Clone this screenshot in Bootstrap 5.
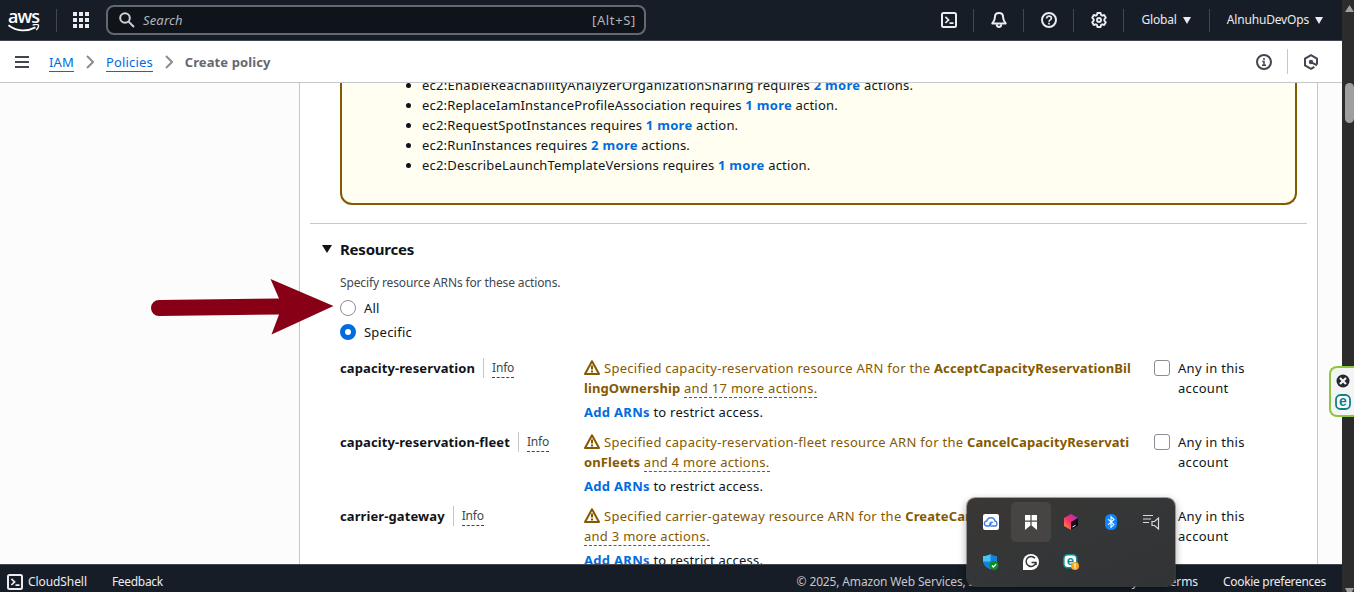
<!DOCTYPE html>
<html lang="en">
<head>
<meta charset="utf-8">
<meta name="viewport" content="width=device-width, initial-scale=1">
<title>Create policy | IAM</title>
<link href="https://cdn.jsdelivr.net/npm/bootstrap@5.3.0/dist/css/bootstrap.min.css" rel="stylesheet">
<style>
  body { font-family: "Noto Sans", "Open Sans", sans-serif; font-size: 13px; line-height: 20px; letter-spacing: .23px; color: #0f141a; background: #fcfcfd; }
  svg { display: block; flex: none; }
  a { color: #006ce0; }
  b { font-weight: 700; letter-spacing: .07px; }
  b.link { color: #006ce0; letter-spacing: .3px; }
  .app-shell { height: 592px; }

  .top-nav { height: 41px; background: #161d26; border-bottom: 1px solid #424650; color: #ebebf0; font-size: 12px; letter-spacing: -.17px; padding-left: 8px; }
  .top-nav .sep { width: 1px; height: 23px; background: #424650; }
  .aws-word { font-family: "Open Sans", sans-serif; font-size: 18px; line-height: 16px; letter-spacing: -.9px; font-weight: 600; color: #fff; }
  .search-box { width: 540px; height: 30px; border: 2px solid #656871; border-radius: 8px; background: #0f141a; font-size: 13px; letter-spacing: .15px; color: #b4b4bb; margin-left: 17px; padding: 0 8px 0 11px; }
  .search-box .keys { letter-spacing: .65px; }
  .nav-cell { width: 49px; }

  .crumb-bar { height: 42px; border-bottom: 1px solid #c6c6cd; background: #fff; color: #424650; padding-left: 15px; letter-spacing: .15px; }
  .crumb-bar a { text-decoration: none; border-bottom: 1px solid #006ce0; line-height: 18px; padding-top: 1px; }
  .crumb-now { color: #656871; letter-spacing: .1px; }

  .page-main { background: #fcfcfd; }
  .panel { width: 1019px; margin-left: 299px; background: #fff; border: solid #c6c6cd; border-width: 0 1px; padding: 0 10px 0 10px; height: 700px; }
  .warn-box { display: flow-root; height: 122px; margin: 0 10px 0 30px; border: 2px solid #855900; border-top: 0; border-radius: 0 0 12px 12px; background: #fffef0; }
  .warn-box ul { margin: -8px 0 0 0; padding-left: 80px; letter-spacing: .18px; }
  .warn-box .wide { letter-spacing: .27px; }
  .rule { height: 1px; background: #c6c6cd; margin-top: 18px; }
  .section-head { font-size: 15px; font-weight: 700; letter-spacing: -.23px; margin: 15px 0 0 12px; }
  .section-body { margin-left: 30px; }
  .hint { font-size: 12px; line-height: 16px; letter-spacing: -.13px; color: #424650; margin-top: 16px; margin-bottom: 7px; }
  .radio-dot { width: 16px; height: 16px; border: 1px solid #8c8c94; border-radius: 50%; background: #fff; }
  .radio-dot.on { border: 5px solid #006ce0; }
  .opt { margin-bottom: 4px; }
  .res-grid { display: grid; grid-template-columns: 244px 547px 1fr; column-gap: 0; row-gap: 10px; margin-top: 16px; }
  .res-name { letter-spacing: .1px; padding-right: 8px; }
  .info-wrap { border-left: 1px solid #c6c6cd; padding-left: 8px; height: 20px; }
  .info-link { font-size: 12px; letter-spacing: -.2px; line-height: 18px; color: #424650; border-bottom: 1px dashed #424650; padding-top: 1px; }
  .warn-text { color: #855900; letter-spacing: .27px; }
  .warn-text b { letter-spacing: .11px; }
  .warn-text svg { display: inline-block; vertical-align: -2px; margin-right: 4px; }
  .dashed { border-bottom: 1px dashed #855900; }
  .check-sq { width: 16px; height: 16px; border: 1px solid #8c8c94; border-radius: 3px; background: #fff; flex: none; margin: 2px 8px 0 23px; }
  .acct { width: 75px; letter-spacing: .3px; }

  .foot { height: 28px; background: #161d26; border-top: 1px solid #424650; color: #ebebf0; font-size: 12px; letter-spacing: -.08px; padding: 7px 16px 0 7px; }
  .foot .copy { color: #c6c6cd; letter-spacing: -.15px; }
  .scroll-track { width: 12px; background: #2c2c2c; }
  .scroll-thumb { width: 9px; height: 40px; border-radius: 5px; background: #9f9f9f; margin-left: 3px; }

  .arrow-mark { left: 150px; top: 278px; }
  .side-tab { left: 1329px; top: 366px; width: 25px; height: 51px; border: 2px solid #8dc63f; border-right: 0; border-radius: 8px 0 0 8px; background: #f4f4f4; padding: 6px 0 0 4px; }
  .tray { left: 967px; top: 498px; width: 208px; height: 88px; border-radius: 8px; background: linear-gradient(160deg, #3a3733, #353637 45%, #323335); box-shadow: 0 0 0 1px #55555580, 0 3px 9px #0006; padding: 4px; display: grid; grid-template-columns: repeat(5, 40px); grid-template-rows: 40px 40px; }
  .tray > div { display: flex; align-items: center; justify-content: center; border-radius: 5px; }
  .tray .hot { background: #464544; }
  .tray text, .side-tab text { font-family: "Liberation Sans", sans-serif; font-weight: 700; letter-spacing: 0; }
</style>
</head>
<body class="overflow-hidden">
<div class="app-shell d-flex position-relative overflow-hidden">
  <div class="d-flex flex-column flex-grow-1">

    <header class="top-nav d-flex align-items-center">
      <div class="d-flex flex-column" style="width:32px">
        <span class="aws-word">aws</span>
        <svg width="32" height="9" viewBox="0 0 32 9" fill="none" stroke="#fff"><path d="M0.5 1.2C8.5 7.5 19 7.8 27.5 3.4" stroke-width="1.8"/><path d="M24.6 1.2C27 .4 29.6.2 30.2.9c.6.8-.3 3.4-1.9 5.2" stroke-width="1.4"/></svg>
      </div>
      <div class="sep" style="margin-left:16px"></div>
      <svg style="margin-left:16px" width="16" height="16" fill="#ebebf0"><path d="M0 0h4v4H0zM6 0h4v4H6zM12 0h4v4h-4zM0 6h4v4H0zM6 6h4v4H6zM12 6h4v4h-4zM0 12h4v4H0zM6 12h4v4H6zM12 12h4v4h-4z"/></svg>
      <div class="search-box d-flex align-items-center">
        <svg width="16" height="16" viewBox="0 0 16 16" fill="none" stroke="#d0d0d6" stroke-width="2"><circle cx="6" cy="6" r="4.8"/><path d="M9.6 9.6 15 15"/></svg>
        <em class="ms-2">Search</em><span class="keys ms-auto">[Alt+S]</span>
      </div>
      <div class="ms-auto d-flex align-items-center">
        <div class="nav-cell d-flex justify-content-center">
          <svg width="16" height="16" viewBox="0 0 16 16" fill="none" stroke="#ebebf0" stroke-width="2"><rect x="1" y="1" width="14" height="14" rx="1.5"/><path d="m4.4 4.8 3.2 3.1-3.2 3.1M8.5 11.2h4" stroke-width="1.7"/></svg>
        </div>
        <div class="sep"></div>
        <div class="nav-cell d-flex justify-content-center">
          <svg width="16" height="16" viewBox="0 0 16 16" fill="none" stroke="#ebebf0" stroke-width="2" stroke-linejoin="round"><path d="M8 1C5.3 1 3.9 3 3.9 5.3c0 3-1.4 4.4-2.6 6.2h13.4c-1.2-1.8-2.6-3.2-2.6-6.2C12.1 3 10.7 1 8 1Z"/><path d="M5.8 12.2c0 1.8 1 2.8 2.2 2.8s2.2-1 2.2-2.8"/></svg>
        </div>
        <div class="sep"></div>
        <div class="nav-cell d-flex justify-content-center">
          <svg width="16" height="16" viewBox="0 0 16 16" fill="none" stroke="#ebebf0" stroke-width="2"><circle cx="8" cy="8" r="7"/><path d="M5.6 6.5C5.6 5 6.6 4.2 8 4.2s2.4.8 2.4 2.1C10.4 8 8 7.7 8 9.7M8 10.7v1.7" stroke-width="1.7"/></svg>
        </div>
        <div class="sep"></div>
        <div class="nav-cell d-flex justify-content-center">
          <svg width="16" height="16" viewBox="0 0 16 16" fill="none" stroke="#ebebf0" stroke-width="1.9" stroke-linejoin="round"><path d="M6.4 1h3.2l.5 2.1 1.1.6 2-.7 1.6 2.7L13.3 7.4v1.2l1.5 1.700-1.600 2.700-2-.7-1.100.6-.5 2.100H6.400l-.5-2.100-1.100-.6-2 .7-1.600-2.700 1.500-1.700V7.400L1.200 5.700 2.800 3l2 .7 1.100-.6Z"/><circle cx="8" cy="8" r="2"/></svg>
        </div>
        <div class="sep"></div>
        <span style="margin-left:17px">Global</span>
        <svg style="margin:0 18px 0 6px" width="8" height="7" fill="#ebebf0"><path d="M0 0h8L4 7Z"/></svg>
        <div class="sep"></div>
        <span style="margin-left:17px">AlnuhuDevOps</span>
        <svg style="margin:0 19px 0 6px" width="8" height="7" fill="#ebebf0"><path d="M0 0h8L4 7Z"/></svg>
      </div>
    </header>

    <nav class="crumb-bar d-flex align-items-center">
      <svg width="14" height="12" fill="#424650"><path d="M0 0h14v2H0zM0 5h14v2H0zM0 10h14v2H0z"/></svg>
      <a href="#" style="margin-left:20px">IAM</a>
      <svg style="margin:0 12px 0 12px" width="8" height="14" fill="none" stroke="#8c8c94" stroke-width="2"><path d="m1 1 6 6-6 6"/></svg>
      <a href="#">Policies</a>
      <svg style="margin:0 12px 0 12px" width="8" height="14" fill="none" stroke="#8c8c94" stroke-width="2"><path d="m1 1 6 6-6 6"/></svg>
      <b class="crumb-now">Create policy</b>
      <svg class="ms-auto" width="16" height="16" viewBox="0 0 16 16" fill="none" stroke="#424650" stroke-width="2"><circle cx="8" cy="8" r="7"/><path d="M8 4v2M6.300 7.500H8V11M6 11.300h4" stroke-width="1.500"/></svg>
      <div style="width:1px;height:25px;background:#c6c6cd;margin:0 16px 0 15px"></div>
      <svg style="margin-right:24px" width="14" height="16" viewBox="0 0 14 16" fill="none" stroke="#424650" stroke-width="2" stroke-linejoin="round"><path d="M13 10.500V4.600L7 1.200 1 4.600v6.800l6 3.400 3.400-2"/><circle cx="7" cy="8" r="1.200"/><path d="m7.500 8.300 5.500 3"/></svg>
    </nav>

    <main class="page-main flex-grow-1 overflow-hidden" style="height:0">
      <div class="panel">
        <div class="warn-box">
          <ul>
            <li class="wide">ec2:EnableReachabilityAnalyzerOrganizationSharing requires <b class="link">2 more</b> actions.</li>
            <li>ec2:ReplaceIamInstanceProfileAssociation requires <b class="link">1 more</b> action.</li>
            <li>ec2:RequestSpotInstances requires <b class="link">1 more</b> action.</li>
            <li>ec2:RunInstances requires <b class="link">2 more</b> actions.</li>
            <li>ec2:DescribeLaunchTemplateVersions requires <b class="link">1 more</b> action.</li>
          </ul>
        </div>
        <div class="rule"></div>
        <div class="section-head d-flex align-items-center">
          <svg style="margin-right:8px" width="10" height="8" fill="#0f141a"><path d="M0 0h10L5 8Z"/></svg>Resources
        </div>
        <div class="section-body">
          <div class="hint">Specify resource ARNs for these actions.</div>
          <div class="opt d-flex align-items-center gap-2"><span class="radio-dot"></span>All</div>
          <div class="opt d-flex align-items-center gap-2"><span class="radio-dot on"></span>Specific</div>

          <div class="res-grid">
            <div class="d-flex align-items-start"><b class="res-name">capacity-reservation</b><span class="info-wrap d-flex align-items-start"><span class="info-link">Info</span></span></div>
            <div>
              <div class="warn-text"><svg width="16" height="15" viewBox="0 0 16 15" fill="none" stroke="#855900" stroke-width="2" stroke-linejoin="round"><path d="M8 1.200 1 14h14Z"/><path d="M8 5.500v4M8 10.600v1.900"/></svg>Specified capacity-reservation resource ARN for the <b>AcceptCapacityReservationBil<br>lingOwnership</b> <span class="dashed">and 17 more actions.</span></div>
              <div class="mt-1"><b class="link">Add ARNs</b> to restrict access.</div>
            </div>
            <div class="d-flex align-items-start"><span class="check-sq"></span><span class="acct">Any in this account</span></div>

            <div class="d-flex align-items-start"><b class="res-name">capacity-reservation-fleet</b><span class="info-wrap d-flex align-items-start"><span class="info-link">Info</span></span></div>
            <div>
              <div class="warn-text"><svg width="16" height="15" viewBox="0 0 16 15" fill="none" stroke="#855900" stroke-width="2" stroke-linejoin="round"><path d="M8 1.200 1 14h14Z"/><path d="M8 5.500v4M8 10.600v1.900"/></svg>Specified capacity-reservation-fleet resource ARN for the <b>CancelCapacityReservati<br>onFleets</b> <span class="dashed">and 4 more actions.</span></div>
              <div class="mt-1"><b class="link">Add ARNs</b> to restrict access.</div>
            </div>
            <div class="d-flex align-items-start"><span class="check-sq"></span><span class="acct">Any in this account</span></div>

            <div class="d-flex align-items-start"><b class="res-name">carrier-gateway</b><span class="info-wrap d-flex align-items-start"><span class="info-link">Info</span></span></div>
            <div>
              <div class="warn-text"><svg width="16" height="15" viewBox="0 0 16 15" fill="none" stroke="#855900" stroke-width="2" stroke-linejoin="round"><path d="M8 1.200 1 14h14Z"/><path d="M8 5.500v4M8 10.600v1.900"/></svg>Specified carrier-gateway resource ARN for the <b>CreateCarrierGateway</b><br><span class="dashed">and 3 more actions.</span></div>
              <div class="mt-1"><b class="link">Add ARNs</b> to restrict access.</div>
            </div>
            <div class="d-flex align-items-start"><span class="check-sq"></span><span class="acct">Any in this account</span></div>
          </div>
        </div>
      </div>
    </main>

    <footer class="foot d-flex align-items-start">
      <svg style="margin-top:2px" width="16" height="16" viewBox="0 0 16 16" fill="none" stroke="#ebebf0" stroke-width="2"><rect x="1" y="1" width="14" height="14" rx="1.500"/><path d="m4.400 4.800 3.200 3.100-3.200 3.100M8.500 11.200h4" stroke-width="1.700"/></svg>
      <span style="margin-left:5px">CloudShell</span>
      <span style="margin-left:25px;letter-spacing:-.3px">Feedback</span>
      <span class="copy ms-auto">© 2025, Amazon Web Services, Inc. or its affiliates.</span>
      <span style="margin-left:27px">Privacy</span>
      <span style="margin-left:26px">Terms</span>
      <span style="margin-left:25px;letter-spacing:-.3px">Cookie preferences</span>
    </footer>
  </div>

  <div class="scroll-track d-flex flex-column">
    <svg style="margin:5px 0 0 3px" width="9" height="7" fill="#9f9f9f"><path d="M4.500 0 9 7H0Z"/></svg>
    <div class="scroll-thumb" style="margin-top:71px"></div>
    <svg class="mt-auto" style="margin-left:3px" width="9" height="4" fill="#9f9f9f"><path d="M0 0h9L7 4H2Z"/></svg>
  </div>

  <svg class="arrow-mark position-absolute" width="184" height="58" fill="#880015"><path d="M9 22 129 20.500 120.500 1 183.500 28 121.500 56.500 129 36.500 9 38A8 8 0 0 1 9 22Z"/></svg>

  <div class="side-tab position-absolute">
    <svg width="16" height="37" viewBox="0 0 16 37"><circle cx="8" cy="7" r="6.500" fill="#222831"/><path d="m5 4 6 6m0-6-6 6" stroke="#f4f4f4" stroke-width="2.200"/><rect x="1" y="21" width="14" height="14" rx="4.500" fill="#fff" stroke="#0b8489" stroke-width="1.800"/><text x="8" y="32.300" text-anchor="middle" font-size="14" fill="#0b8489">e</text></svg>
  </div>

  <div class="tray position-absolute">
    <div><svg width="16" height="16"><rect width="16" height="16" rx="2" fill="#fff"/><path d="M8.500 9.200 6 12H4a2.500 2.500 0 0 1-.2-5A4.200 4.200 0 0 1 12 7a2.600 2.600 0 0 1 .2 5H9.500a2 2 0 1 1 .5-3.500" fill="none" stroke="#3f7bea" stroke-width="1.400"/></svg></div>
    <div class="hot"><svg width="12" height="15" fill="#fff"><path d="M0 0h5.400v5.500H0zM6.600 0H12v5.500H6.600zM0 6.700h5.400v3.800L0 15ZM6.600 6.700H12V15l-5.400-4.500Z"/></svg></div>
    <div><svg width="14" height="16"><defs><linearGradient id="cube" x1="0" y1="1" x2="1" y2="0"><stop offset="0" stop-color="#ff9a3c"/><stop offset=".45" stop-color="#f8306a"/><stop offset="1" stop-color="#a52bd6"/></linearGradient></defs><path d="M7 0 14 4v8l-7 4-7-4V4Z" fill="url(#cube)"/><path d="M14 4v8l-7 4V8Z" fill="#120818"/><path d="m8.500 13 3-1.700" stroke="#fff"/></svg></div>
    <div><svg width="12" height="16"><rect width="12" height="16" rx="5.500" fill="#0a84ff"/><path d="m3 5.200 6 5.400L6 13.200V2.800l3 2.600-6 5.400" fill="none" stroke="#fff" stroke-width="1.100"/></svg></div>
    <div><svg width="17" height="16" fill="none" stroke="#d8d8d8" stroke-width="1.200"><path d="M0 1.500h10M0 5h8M0 8.500h6M9 7.500h2.500L15.500 4v11l-4-3.500H9Z"/></svg></div>
    <div><svg width="16" height="16"><path d="M7.500 0C9.500 1.500 12 2 14 2v5c0 4-3 7-6.500 8.500C4 14 0 11 0 7V2c3 0 5.500-.5 7.500-2Z" fill="#1583d8"/><path d="M7.500 0v7.500H0V2c3 0 5.500-.5 7.500-2Z" fill="#48c4f4"/><circle cx="11" cy="11.500" r="4.500" fill="#0e8a23"/><path d="m8.900 11.500 1.500 1.500 2.800-2.900" fill="none" stroke="#fff" stroke-width="1.300"/></svg></div>
    <div><svg width="16" height="16"><path d="M8 0a8 8 0 1 1 0 16H0V8a8 8 0 0 1 8-8Z" fill="#fff"/><path d="M12 4.300A5 5 0 1 0 13 8.500H8.500M13 8.500V11" fill="none" stroke="#333" stroke-width="1.500"/></svg></div>
    <div><svg width="16" height="16"><rect x=".8" y=".8" width="13" height="13" rx="4" fill="#fff" stroke="#0b8d95" stroke-width="1.600"/><text x="7.300" y="11.300" text-anchor="middle" font-size="13" fill="#0b8d95">e</text><circle cx="12" cy="12" r="4" fill="#f5a623"/><path d="M12 9.500v3M12 13.300v1.200" stroke="#fff" stroke-width="1.300"/></svg></div>
  </div>
</div>
<script src="https://cdn.jsdelivr.net/npm/bootstrap@5.3.0/dist/js/bootstrap.bundle.min.js"></script>
</body>
</html>
